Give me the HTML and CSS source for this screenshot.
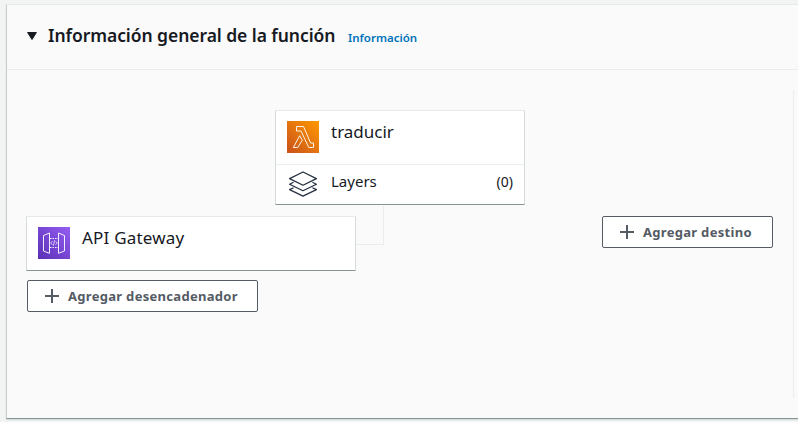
FILE: index.html
```html
<!DOCTYPE html>
<html lang="es">
<head>
<meta charset="utf-8">
<title>Información general de la función</title>
<link rel="stylesheet" href="styles.css">
</head>
<body>
<section class="panel">
  <header class="panel-header">
    <svg class="caret" width="10" height="8" viewBox="0 0 10 8"><path d="M.6.5h8.800L5 7.500z" fill="#16191f" stroke="#16191f" stroke-linejoin="round"/></svg>
    <h2 class="title">Información general de la función</h2>
    <a class="info">Información</a>
  </header>
  <div class="panel-body">
    <div class="designer">
      <div class="card function-card">
        <div class="card-row function-row">
          <svg class="icon" width="32" height="32" viewBox="0 0 32 32">
            <defs><linearGradient id="orange" x1="0" y1="1" x2="1" y2="0"><stop offset="0" stop-color="#c8511b"/><stop offset="1" stop-color="#f90"/></linearGradient></defs>
            <path fill="url(#orange)" d="M0 0h32v32H0z"/>
            <path d="M9.500 5.500h7L23.600 22h2.900v4.500h-4.700L14 10H9.500zM12.700 14.700l2.600 4.600-4.600 7.200H6.300z" fill="none" stroke="#fff" stroke-opacity=".9" stroke-width="1" stroke-linejoin="round"/>
          </svg>
          <span class="name function-name">traducir</span>
        </div>
        <div class="card-row layers-row">
          <svg class="icon" width="32" height="28" viewBox="0 0 32 28" fill="none" stroke="#232f3e" stroke-width="1.250" stroke-linejoin="round">
            <path d="M16 2l13.400 6.600L16 15.200 2.600 8.600z"/>
            <path d="M6.600 12.300L2.600 14.200 16 20.700l13.400-6.500-4-1.900"/>
            <path d="M6.600 17.700L2.600 19.600 16 26.100l13.400-6.500-4-1.900"/>
          </svg>
          <span class="layers">Layers</span>
          <span class="count">(0)</span>
        </div>
      </div>
      <div class="links">
        <div class="triggers">
          <div class="card trigger-card">
            <svg class="icon" width="32" height="32" viewBox="0 0 32 32">
              <defs><linearGradient id="purple" x1="0" y1="1" x2="1" y2="0"><stop offset="0" stop-color="#5a30b5"/><stop offset="1" stop-color="#945df2"/></linearGradient></defs>
              <path fill="url(#purple)" d="M0 0h32v32H0z"/>
              <g fill="none" stroke="#fff" stroke-opacity=".9" stroke-width="1" stroke-linejoin="round">
                <path d="M11.500 6v20.300l-6-2.300V8.500zM20.500 6v20.300l6-2.300V8.500z"/>
                <path d="M12 11.500h8M12 20.500h8" stroke-dasharray="1.500 1"/>
                <path d="M14.400 14.200L12.700 16l1.700 1.800M17.600 14.200l1.700 1.800-1.700 1.800M16.600 13.300l-1.200 5.400" stroke-width=".8"/>
              </g>
            </svg>
            <span class="name gateway-name">API Gateway</span>
          </div>
          <button class="button add-trigger">
            <svg width="14" height="14" viewBox="0 0 14 14"><path d="M7 0v14M0 7h14" stroke="#545b64" stroke-width="2"/></svg>
            <span class="trigger-label">Agregar desencadenador</span>
          </button>
        </div>
        <div class="connector"></div>
        <button class="button add-destination">
          <svg width="14" height="14" viewBox="0 0 14 14"><path d="M7 0v14M0 7h14" stroke="#545b64" stroke-width="2"/></svg>
          <span class="destination-label">Agregar destino</span>
        </button>
      </div>
    </div>
    <div class="divider"></div>
  </div>
</section>
</body>
</html>
```
FILE: styles.css
```css
* { box-sizing: border-box; }
body {
  margin: 0;
  height: 422px;
  padding: 4px 0 0 6px;
  overflow: hidden;
  background: #f2f3f3;
  color: #16191f;
  font-family: "Noto Sans", "Open Sans", sans-serif;
}
.panel {
  height: 415px;
  background: #fafafa;
  border-top: 1px solid #e6eaea;
  border-left: 1px solid #c5cccc;
  border-bottom: 1px solid #879596;
  box-shadow: 0 1px 1px #d5dbdb;
}
.panel-header {
  display: flex;
  align-items: center;
  height: 65px;
  padding-left: 20px;
  border-bottom: 1px solid #eaeded;
}
.caret { margin-top: -2px; }
.title {
  width: 287px;
  margin: -5px 0 0 11px;
  font-size: 17.500px;
  font-weight: 600;
  letter-spacing: -.06px;
  white-space: nowrap;
}
.info {
  margin-left: 13px;
  margin-top: 0;
  color: #0073bb;
  font-size: 11.500px;
  font-weight: 600;
}
.panel-body { display: flex; padding-top: 20px; }
.designer { width: 786px; padding: 20px 20px 0 19px; }
.divider { width: 1px; height: 308px; background: #eaeded; }
.card {
  background: #fff;
  border: 1px solid;
  border-color: #e6eaea #d5dbdb #879596;
  border-radius: 1px;
}
.function-card { width: 250px; height: 95px; margin-left: 249px; }
.card-row { display: flex; padding: 0 11px; }
.function-row { height: 54px; padding-top: 10px; border-bottom: 1px solid #eaeded; }
.layers-row { height: 39px; padding-top: 5px; }
.name { margin-left: 12px; font-size: 17px; line-height: 22px; white-space: nowrap; }
.gateway-name { letter-spacing: .2px; }
.layers { margin-left: 12px; font-size: 15px; line-height: 23px; }
.count { margin-left: auto; font-size: 14px; line-height: 23px; }
.icon { flex: none; }
.links { display: flex; align-items: flex-start; padding-top: 1px; }
.triggers { width: 330px; padding-top: 10px; }
.trigger-card { display: flex; height: 55px; padding: 10px 11px; }
.connector {
  width: 28px;
  height: 39px;
  border: solid #eaeded;
  border-width: 0 1px 1px 0;
}
.button {
  display: flex;
  align-items: center;
  height: 32px;
  padding: 0 0 0 17px;
  background: #fff;
  border: 1px solid #545b64;
  border-radius: 2px;
  color: #545b64;
  font: 700 13px/20px "Noto Sans", sans-serif;
  letter-spacing: .3px;
  white-space: nowrap;
}
.button span { margin-left: 9px; }
.add-trigger { width: 231px; margin: 9px 0 0 1px; }
.add-destination { width: 171px; margin: 10px 0 0 auto; }
```
